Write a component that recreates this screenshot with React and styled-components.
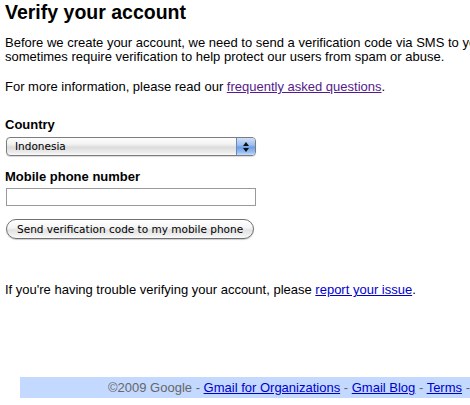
import React from "react";
import styled, { createGlobalStyle } from "styled-components";

const Global = createGlobalStyle`
  html, body { margin: 0; padding: 0; overflow: hidden; background: #fff; }
  body { font-family: "Liberation Sans", Arial, sans-serif; font-size: 13px; color: #000; }
`;

const Page = styled.div`
  width: 640px;
  padding: 0 0 0 5px;
  display: flex;
  flex-direction: column;
`;

const Title = styled.h2`
  margin: 1px 0 0;
  font-size: 19.5px;
  line-height: 23px;
  font-weight: bold;
`;

const Para = styled.p`
  margin: ${(p) => p.$mt || 0}px 0 0;
  line-height: 14px;
  white-space: ${(p) => (p.$nowrap ? "nowrap" : "normal")};
`;

const Link = styled.a`
  color: ${(p) => (p.$visited ? "#551a8b" : "#0000cc")};
  text-decoration: underline;
`;

const Form = styled.form`
  margin-top: 23px;
  display: flex;
  flex-direction: column;
  align-items: flex-start;
`;

const Label = styled.label`
  font-weight: bold;
  line-height: 15px;
  margin-top: ${(p) => p.$mt || 0}px;
`;

const SelectFrame = styled.div`
  margin: 5px 0 0 1px;
  width: 250px;
  height: 19px;
  box-sizing: border-box;
  border: 1px solid #7c7c7c;
  border-radius: 4px;
  display: flex;
  align-items: stretch;
  overflow: hidden;
  background: linear-gradient(#fdfdfd 0%, #f3f3f3 35%, #dcdcdc 55%, #ececec 85%, #fafafa 100%);
  box-shadow: 0 1px 1px rgba(0,0,0,0.15);
`;

const SelectValue = styled.span`
  flex: 1;
  padding-left: 8px;
  font-family: "DejaVu Sans", sans-serif;
  font-size: 10.5px;
  line-height: 17px;
  color: #000;
`;

const Stepper = styled.span`
  width: 18px;
  border-left: 1px solid #6b86b8;
  background: linear-gradient(#cfe0f7 0%, #9fc0ee 40%, #6f9ee6 55%, #98c0f3 85%, #c8dffb 100%);
  display: flex;
  flex-direction: column;
  align-items: center;
  justify-content: center;
  gap: 2px;
`;

const Arrow = styled.span`
  width: 0;
  height: 0;
  border-left: 3px solid transparent;
  border-right: 3px solid transparent;
  ${(p) => (p.$up ? "border-bottom: 4px solid #111;" : "border-top: 4px solid #111;")}
`;

const TextInput = styled.input`
  margin: 4px 0 0 1px;
  width: 250px;
  height: 18px;
  box-sizing: border-box;
  border: 1px solid #9a9a9a;
  padding: 1px 3px;
  font-size: 13px;
  font-family: "Liberation Sans", Arial, sans-serif;
  outline: none;
`;

const Button = styled.button`
  margin: 13px 0 0 1px;
  height: 20px;
  box-sizing: border-box;
  padding: 0 10px;
  border: 1px solid #707070;
  border-radius: 10px;
  background: linear-gradient(#ffffff 0%, #f4f4f4 45%, #e2e2e2 55%, #f0f0f0 85%, #fbfbfb 100%);
  font-family: "DejaVu Sans", sans-serif;
  font-size: 10.5px;
  line-height: 18px;
  color: #000;
  box-shadow: 0 1px 1px rgba(0,0,0,0.2);
`;

const Footer = styled.div`
  margin: 80px 0 0 15px;
  width: 560px;
  height: 21px;
  background: #c3d9ff;
  color: #676767;
  line-height: 21px;
  padding-left: 88px;
  box-sizing: border-box;
  white-space: nowrap;
`;

export default function App() {
  return (
    <>
      <Global />
      <Page>
        <Title>Verify your account</Title>
        <Para $mt={12} $nowrap>
          Before we create your account, we need to send a verification code via SMS to your mobile phone. We
          <br />
          sometimes require verification to help protect our users from spam or abuse.
        </Para>
        <Para $mt={16}>
          For more information, please read our{" "}
          <Link href="#" $visited>frequently asked questions</Link>.
        </Para>
        <Form onSubmit={(e) => e.preventDefault()}>
          <Label>Country</Label>
          <SelectFrame>
            <SelectValue>Indonesia</SelectValue>
            <Stepper>
              <Arrow $up />
              <Arrow />
            </Stepper>
          </SelectFrame>
          <Label $mt={13}>Mobile phone number</Label>
          <TextInput type="text" />
          <Button type="submit">Send verification code to my mobile phone</Button>
        </Form>
        <Para $mt={44}>
          If you're having trouble verifying your account, please{" "}
          <Link href="#">report your issue</Link>.
        </Para>
        <Footer>
          ©2009 Google - <Link href="#">Gmail for Organizations</Link> -{" "}
          <Link href="#">Gmail Blog</Link> - <Link href="#">Terms</Link> -{" "}
          <Link href="#">Privacy Policy</Link> - <Link href="#">Google Home</Link>
        </Footer>
      </Page>
    </>
  );
}
